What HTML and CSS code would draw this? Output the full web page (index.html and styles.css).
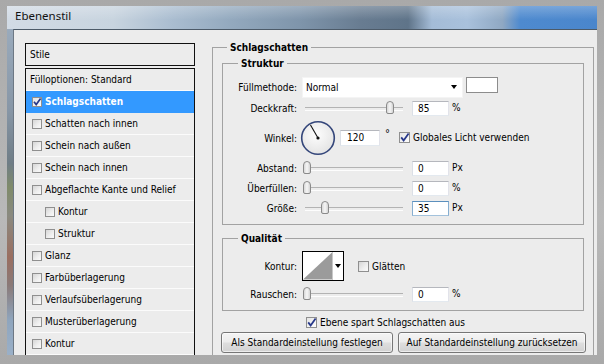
FILE: index.html
```html
<!DOCTYPE html>
<html lang="de">
<head>
<meta charset="utf-8">
<title>Ebenenstil</title>
<link rel="stylesheet" href="styles.css">
</head>
<body>
<div class="frame">
  <div class="glass">
    <div class="titlebar">Ebenenstil</div>
    <div class="dialog">
      <div class="sidebar">
        <div class="styles-head">Stile</div>
        <ul class="style-list">
          <li class="item plain">Fülloptionen: Standard</li>
          <li class="item selected"><span class="cb on"><svg viewBox="0 0 10 10" width="10" height="10"><path d="M2 4.8 L4.2 7.6 L8.6 1.6" fill="none" stroke="#27388a" stroke-width="1.7"/></svg></span>Schlagschatten</li>
          <li class="item"><span class="cb"></span>Schatten nach innen</li>
          <li class="item"><span class="cb"></span>Schein nach außen</li>
          <li class="item"><span class="cb"></span>Schein nach innen</li>
          <li class="item"><span class="cb"></span>Abgeflachte Kante und Relief</li>
          <li class="item sub"><span class="cb"></span>Kontur</li>
          <li class="item sub"><span class="cb"></span>Struktur</li>
          <li class="item"><span class="cb"></span>Glanz</li>
          <li class="item"><span class="cb"></span>Farbüberlagerung</li>
          <li class="item"><span class="cb"></span>Verlaufsüberlagerung</li>
          <li class="item"><span class="cb"></span>Musterüberlagerung</li>
          <li class="item"><span class="cb"></span>Kontur</li>
        </ul>
      </div>

      <fieldset class="group main">
        <legend>Schlagschatten</legend>

        <fieldset class="group inner struktur">
          <legend>Struktur</legend>
          <div class="row r-mode">
            <span class="lbl">Füllmethode:</span>
            <div class="select">Normal<span class="drop"></span></div>
            <span class="swatch"></span>
          </div>
          <div class="row r-slide">
            <span class="lbl">Deckkraft:</span>
            <div class="slider"><span class="thumb" style="left:81px"></span></div>
            <span class="num">85</span>
            <span class="unit">%</span>
          </div>
          <div class="row r-angle">
            <span class="lbl">Winkel:</span>
            <svg class="dial" width="36" height="36" viewBox="0 0 36 36">
              <defs>
                <radialGradient id="dialfill" cx="0.45" cy="0.4" r="0.65">
                  <stop offset="0" stop-color="#fdfdfd"/>
                  <stop offset="1" stop-color="#e2e2e2"/>
                </radialGradient>
              </defs>
              <circle cx="18" cy="18" r="16.3" fill="url(#dialfill)" stroke="#34467a" stroke-width="1.6"/>
              <line x1="18" y1="18" x2="10.5" y2="5" stroke="#111" stroke-width="1.1"/>
              <circle cx="18" cy="18" r="1.6" fill="#111"/>
            </svg>
            <span class="num wide">120</span>
            <span class="deg">°</span>
            <span class="cb on big"><svg viewBox="0 0 11 11" width="11" height="11"><path d="M2.2 5.4 L4.6 8.4 L9.6 1.4" fill="none" stroke="#27388a" stroke-width="1.8"/></svg></span>
            <span class="cb-text">Globales Licht verwenden</span>
          </div>
          <div class="row r-slide">
            <span class="lbl">Abstand:</span>
            <div class="slider"><span class="thumb" style="left:-2px"></span></div>
            <span class="num">0</span>
            <span class="unit">Px</span>
          </div>
          <div class="row r-slide">
            <span class="lbl">Überfüllen:</span>
            <div class="slider"><span class="thumb" style="left:-2px"></span></div>
            <span class="num">0</span>
            <span class="unit">%</span>
          </div>
          <div class="row r-slide">
            <span class="lbl">Größe:</span>
            <div class="slider"><span class="thumb" style="left:16px"></span></div>
            <span class="num focus">35</span>
            <span class="unit">Px</span>
          </div>
        </fieldset>

        <fieldset class="group inner qualitaet">
          <legend>Qualität</legend>
          <div class="row r-contour">
            <span class="lbl">Kontur:</span>
            <div class="contour">
              <svg width="30" height="28" viewBox="0 0 30 28"><polygon points="0,28 30,0 30,28" fill="#9b9b9b"/></svg>
              <span class="contour-drop"><span class="drop"></span></span>
            </div>
            <span class="cb big gap"></span>
            <span class="cb-text">Glätten</span>
          </div>
          <div class="row r-slide">
            <span class="lbl">Rauschen:</span>
            <div class="slider"><span class="thumb" style="left:-2px"></span></div>
            <span class="num">0</span>
            <span class="unit">%</span>
          </div>
        </fieldset>

        <div class="knockout">
          <span class="cb on big"><svg viewBox="0 0 11 11" width="11" height="11"><path d="M2.2 5.4 L4.6 8.4 L9.6 1.4" fill="none" stroke="#27388a" stroke-width="1.8"/></svg></span>
          <span class="cb-text">Ebene spart Schlagschatten aus</span>
        </div>

        <div class="buttons">
          <button class="btn b1" type="button">Als Standardeinstellung festlegen</button>
          <button class="btn b2" type="button">Auf Standardeinstellung zurücksetzen</button>
        </div>
      </fieldset>
    </div>
  </div>
</div>
</body>
</html>
```

FILE: styles.css
```css
* { box-sizing: border-box; }

html, body {
  margin: 0;
  padding: 0;
}

body {
  width: 604px;
  height: 364px;
  overflow: hidden;
  background: #b0b0b0;
  font-family: "DejaVu Sans Condensed", "DejaVu Sans", sans-serif;
  font-stretch: condensed;
  font-size: 10px;
  color: #000;
}

.frame {
  width: 604px;
  height: 364px;
  padding: 6px 7px 0 7px;
  background: linear-gradient(180deg, #a9a9a9 0%, #b9b9b9 60%, #a9a9a9 100%);
}

.glass {
  height: 349px;
  display: flex;
  flex-direction: column;
  background: linear-gradient(180deg, #9fb0c2 0%, #8796a6 30%, #6f7d86 45%, #7f8b6a 52%, #8a8a80 60%, #9a6e60 72%, #8a7a78 80%, #8fa5bd 90%, #9ab0c8 100%);
}

.titlebar {
  height: 23px;
  flex: none;
  padding-left: 8px;
  line-height: 20px;
  font-family: "Noto Sans", "Open Sans", sans-serif;
  font-stretch: normal;
  font-size: 11.5px;
  color: #111;
  background:
    linear-gradient(180deg, rgba(255,255,255,0.25), rgba(255,255,255,0) 60%),
    linear-gradient(90deg, #d2dbe5 0%, #c8d4df 18%, #aabdd0 28%, #93a9be 38%, #7e94aa 50%, #687c91 60%, #5f7489 68%, #a4bcd7 72%, #a9c1dc 78%, #8fa8c3 84%, #4e8acf 87%, #4a86cc 100%);
}

.dialog {
  flex: 1;
  min-height: 0;
  margin-left: 6px;
  border-top: 1px solid #4c5a68;
  border-left: 1px solid #6d7884;
  background: #ececec;
  display: flex;
  align-items: flex-start;
  padding: 11px 0 0 11px;
  overflow: hidden;
}

/* ---------- left list ---------- */
.sidebar {
  width: 170px;
  flex: none;
  margin-top: 2px;
}

.styles-head {
  height: 23px;
  border: 1px solid #111;
  padding-left: 4px;
  line-height: 21px;
}

.style-list {
  list-style: none;
  margin: 2px 0 0;
  padding: 0;
  border: 1px solid #111;
  border-bottom: none;
}

.item {
  height: 22px;
  display: flex;
  align-items: center;
  padding-left: 6px;
  border-bottom: 1px solid #fbfbfb;
  white-space: nowrap;
}

.item.plain { padding-left: 4px; }
.item.sub { padding-left: 19px; }

.item.selected {
  background: #3399ff;
  color: #fff;
  font-weight: bold;
  border-bottom-color: #3399ff;
}

.cb {
  width: 10px;
  height: 10px;
  flex: none;
  margin-right: 3px;
  border: 1px solid #8f8f8f;
  background: linear-gradient(135deg, #d6d6d6 0%, #efefef 60%, #fafafa 100%);
  position: relative;
}

.cb svg {
  position: absolute;
  left: -1px;
  top: -1px;
}

.cb.big {
  width: 11px;
  height: 11px;
}

.cb.on {
  background: linear-gradient(135deg, #e4e4e4 0%, #f4f4f4 60%, #fdfdfd 100%);
}

/* ---------- right panel ---------- */
.group {
  margin: 0;
  padding: 0;
  min-width: 0;
  border: 1px solid #a2a2a2;
}

.group legend {
  padding: 0 3px;
  font-weight: bold;
  line-height: 13px;
}

.main {
  width: 382px;
  height: 330px;
  margin: 0 0 0 17px;
  flex: none;
}

.main > legend { margin-left: 14px; }

.inner {
  margin: 0 9px;
}

.inner > legend { margin-left: 15px; }

.struktur {
  margin-top: 3px;
  padding: 6px 0 6px;
}

.qualitaet {
  margin-top: 7px;
  padding: 5px 0 6px;
}

.row {
  display: flex;
  align-items: center;
  height: 20px;
}

.r-mode { height: 22px; }
.r-angle { height: 40px; }
.r-contour { height: 32px; margin-bottom: 2px; }

.lbl {
  width: 74px;
  margin-right: 5px;
  text-align: right;
  flex: none;
}

.select {
  width: 161px;
  height: 21px;
  background: #fff;
  border: 1px solid #f4f4f4;
  padding-left: 3px;
  display: flex;
  align-items: center;
  position: relative;
}

.drop {
  width: 0;
  height: 0;
  border-left: 3.5px solid transparent;
  border-right: 3.5px solid transparent;
  border-top: 4px solid #000;
}

.select .drop {
  margin-left: auto;
  margin-right: 5px;
}

.swatch {
  width: 32px;
  height: 16px;
  margin-left: 3px;
  margin-top: -4px;
  background: #fff;
  border: 1px solid #8c8c8c;
}

.slider {
  position: relative;
  width: 98px;
  height: 14px;
  margin-left: 3px;
  flex: none;
}

.slider::before {
  content: "";
  position: absolute;
  left: 0;
  right: 0;
  top: 6px;
  height: 2px;
  border-top: 1px solid #b3b3b3;
  border-bottom: 1px solid #fdfdfd;
}

.thumb {
  position: absolute;
  top: 0;
  width: 8px;
  height: 13px;
  border: 1px solid #8a8a8a;
  border-radius: 4px 4px 2px 2px;
  background: linear-gradient(90deg, #d8d8d8 0%, #f6f6f6 50%, #d4d4d4 100%);
}

.num {
  width: 37px;
  height: 15px;
  margin-left: 9px;
  padding-left: 5px;
  line-height: 13px;
  background: #fff;
  border: 1px solid;
  border-color: #b5b7bd #e2e3ea #e3e9ef #dbdfe6;
  flex: none;
}

.num.focus {
  border-color: #5b8fbd #86aed0 #a3c2dc #86aed0;
}

.num.wide {
  width: 40px;
  height: 16px;
  margin-left: 4px;
  padding-left: 6px;
}

.unit {
  margin-left: 3px;
  margin-top: -1px;
}

.dial { flex: none; margin-left: -2px; }

.deg {
  margin-left: 5px;
  margin-top: -9px;
  font-size: 11px;
}

.r-angle .cb { margin-left: 9px; margin-top: -2px; }

.cb-text { white-space: nowrap; }

.r-angle .cb-text { margin-top: -2px; }

.contour {
  width: 42px;
  height: 30px;
  display: flex;
  background: #fff;
  border: 1px solid #000;
  flex: none;
}

.contour svg {
  flex: none;
  border-right: 1px solid #c8c8c8;
}

.contour-drop {
  flex: 1;
  display: flex;
  align-items: center;
  justify-content: center;
}

.cb.gap { margin-left: 14px; }

.knockout {
  display: flex;
  align-items: center;
  height: 19px;
  margin-top: 2px;
  padding-left: 93px;
}

.buttons {
  display: flex;
  gap: 5px;
  padding-left: 8px;
}

.btn {
  height: 21px;
  padding: 0;
  font: inherit;
  color: #000;
  border: 1px solid #767676;
  border-radius: 3px;
  background: linear-gradient(180deg, #f4f4f4 0%, #ececec 48%, #dedede 52%, #d2d2d2 100%);
  box-shadow: inset 0 0 0 1px rgba(255,255,255,0.6);
}

.b1 { width: 172px; }
.b2 { width: 188px; }
```
